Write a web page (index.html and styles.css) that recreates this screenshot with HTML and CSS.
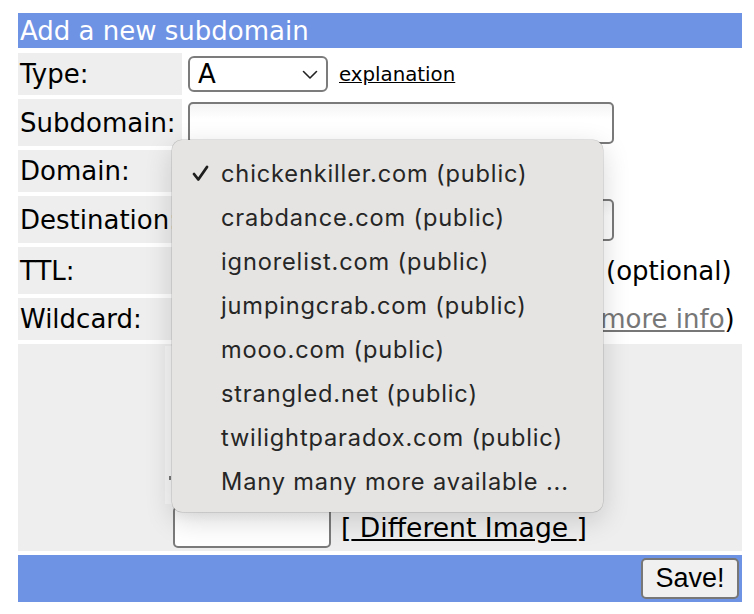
FILE: index.html
```html
<!DOCTYPE html>
<html>
<head>
<meta charset="utf-8">
<link rel="stylesheet" href="styles.css">
</head>
<body>
<div class="page">
  <form class="form">
    <div class="head">Add a new subdomain</div>

    <div class="label short">Type:</div>
    <div class="value short">
      <div class="select">
        <span>A</span>
        <svg class="chev" width="16" height="10" viewBox="0 0 16 10"><polyline points="1.5,1.5 8,8 14.5,1.5" fill="none" stroke="#222" stroke-width="1.6" stroke-linecap="round" stroke-linejoin="round"/></svg>
      </div>
      <a class="small-link" href="#">explanation</a>
    </div>

    <div class="label">Subdomain:</div>
    <div class="value"><input class="text wide" type="text"></div>

    <div class="label short">Domain:</div>
    <div class="value short"><div class="select dom"></div></div>

    <div class="label">Destination:</div>
    <div class="value"><input class="text wide" type="text"></div>

    <div class="label">TTL:</div>
    <div class="value"><input class="text ttl" type="text"><span class="note">(optional)</span></div>

    <div class="label short">Wildcard:</div>
    <div class="value short"><input class="check" type="checkbox"><span class="wild">(<a class="gray-link" href="#">more info</a>)</span></div>

    <div class="captcha">
      <div class="cap-img"><span class="mark"></span></div>
      <div class="cap-line">
        <input class="text cap-input" type="text">
        <span class="diff">[<a href="#"> Different Image </a>]</span>
      </div>
    </div>

    <div class="foot"><button type="button" class="save">Save!</button></div>
  </form>

  <div class="menu">
    <div class="item"><svg class="tick" width="17" height="17" viewBox="0 0 17 17"><polyline points="2,9 6.3,14.5 15,2" fill="none" stroke="#1e1e1e" stroke-width="2.8" stroke-linecap="round" stroke-linejoin="round"/></svg><span>chickenkiller.com (public)</span></div>
    <div class="item"><span>crabdance.com (public)</span></div>
    <div class="item"><span>ignorelist.com (public)</span></div>
    <div class="item"><span>jumpingcrab.com (public)</span></div>
    <div class="item"><span>mooo.com (public)</span></div>
    <div class="item"><span>strangled.net (public)</span></div>
    <div class="item"><span>twilightparadox.com (public)</span></div>
    <div class="item"><span>Many many more available ...</span></div>
  </div>
</div>
</body>
</html>
```

FILE: styles.css
```css
html, body {
  margin: 0;
  padding: 0;
  background: #ffffff;
}

.page {
  position: relative;
  padding: 13px 12px 0 18px;
  font-family: "DejaVu Sans", Verdana, sans-serif;
  font-size: 26px;
  color: #000;
}

.form {
  display: grid;
  grid-template-columns: 164px 1fr;
  row-gap: 4px;
  width: 724px;
}

.head {
  grid-column: 1 / 3;
  height: 35px;
  background: #6e93e5;
  color: #fff;
  padding-left: 2px;
  line-height: 37px;
  font-size: 26px;
  margin-bottom: 1px;
}

.label {
  background: #eeeeee;
  height: 47px;
  display: flex;
  align-items: center;
  padding-left: 2px;
  white-space: nowrap;
  overflow: hidden;
}

.value {
  height: 47px;
  display: flex;
  align-items: center;
  padding-left: 6px;
  background: #fff;
}

.short { height: 42px; }

.select {
  box-sizing: border-box;
  width: 140px;
  height: 36px;
  border: 2px solid #7c7c7c;
  border-radius: 6px;
  background: #fff;
  display: flex;
  align-items: center;
  justify-content: space-between;
  padding: 0 8px 0 8px;
}

.select.dom { width: 410px; }

.chev { margin-top: 1px; }

.small-link {
  color: #000;
  font-size: 19.8px;
  margin-left: 11px;
}

.text {
  box-sizing: border-box;
  height: 42px;
  border: 2px solid #7a7a7a;
  border-radius: 5px;
  background: linear-gradient(#f4f4f4, #ffffff 40%);
  font: inherit;
  padding: 0 6px;
}

.wide { width: 426px; }

.ttl { width: 410px; }

.note { margin-left: 8px; }

.check {
  width: 20px;
  height: 20px;
  margin: 0 378px 0 4px;
}

.gray-link { color: #777; }

.captcha {
  grid-column: 1 / 3;
  background: #eeeeee;
  height: 207px;
  display: flex;
  flex-direction: column;
  align-items: center;
  padding-top: 2px;
  box-sizing: border-box;
}

.cap-img {
  position: relative;
  width: 430px;
  height: 158px;
  background: #f6f6f6;
}

.mark {
  position: absolute;
  left: 4px;
  top: 130px;
  width: 2px;
  height: 4px;
  background: #777;
}

.cap-line {
  display: flex;
  align-items: center;
  margin-top: 2px;
}

.cap-input { width: 158px; }

.diff {
  margin-left: 10px;
  font-size: 26.6px;
}

.diff a { color: #000; }

.foot {
  grid-column: 1 / 3;
  height: 47px;
  background: #6e93e5;
  display: flex;
  align-items: center;
  justify-content: flex-end;
  padding-right: 3px;
}

.save {
  box-sizing: border-box;
  width: 98px;
  height: 41px;
  border: 2px solid #777;
  border-radius: 5px;
  background: #f0f0f0;
  font-family: "Liberation Sans", Arial, sans-serif;
  font-size: 27px;
  color: #000;
  padding: 0;
}

.menu {
  position: absolute;
  left: 172px;
  top: 140px;
  width: 431px;
  box-sizing: border-box;
  padding: 11px 0 9px;
  background: #e5e4e2;
  border-radius: 10px;
  box-shadow: 0 0 0 0.5px rgba(0, 0, 0, 0.18), 0 8px 28px rgba(0, 0, 0, 0.16);
  font-family: Inter, "Noto Sans", sans-serif;
  font-size: 23.6px;
  letter-spacing: 0.85px;
  color: #262626;
}

.item {
  position: relative;
  height: 44px;
  display: flex;
  align-items: center;
  padding-left: 49px;
  white-space: nowrap;
}

.tick {
  position: absolute;
  left: 20px;
  top: 14px;
}
```
